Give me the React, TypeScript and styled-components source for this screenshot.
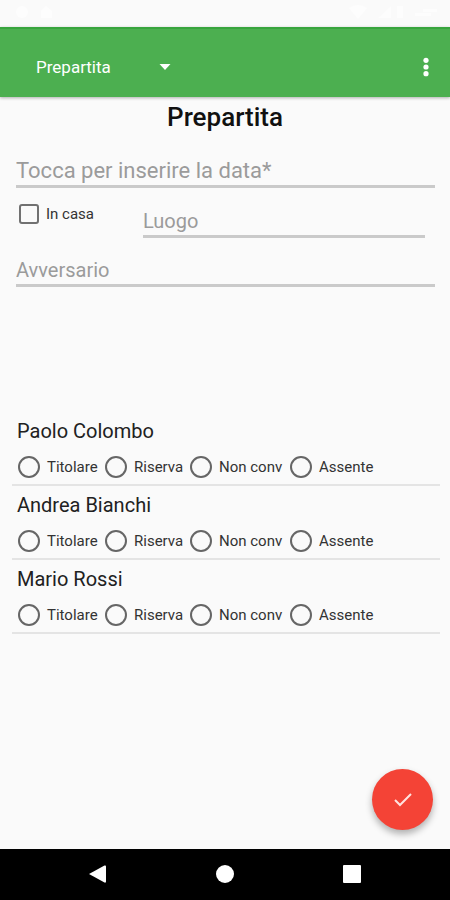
import React from "react";
import styled, { createGlobalStyle } from "styled-components";

const GlobalStyle = createGlobalStyle`
  * { box-sizing: border-box; }
  body {
    margin: 0;
    background: #fafafa;
    font-family: Roboto, "Liberation Sans", sans-serif;
    color: #212121;
  }
`;

const Screen = styled.div`
  display: flex;
  flex-direction: column;
  min-height: 100vh;
`;

const StatusBar = styled.div`
  display: flex;
  justify-content: space-between;
  align-items: flex-start;
  height: 27px;
  padding: 4px 9px 0 14px;
`;

const Toolbar = styled.header`
  display: flex;
  align-items: center;
  justify-content: space-between;
  height: 70px;
  padding: 8px 12px 0 36px;
  background: #4caf50;
  border-top: 2px solid #38a53d;
  box-shadow: 0 1px 3px rgba(0, 0, 0, 0.3);
`;

const Spinner = styled.div`
  display: grid;
  grid-template-columns: 135px;
  align-items: center;

  > * { grid-area: 1 / 1; }
  > svg { justify-self: end; pointer-events: none; }
`;

const SpinnerSelect = styled.select`
  appearance: none;
  width: 100%;
  height: 40px;
  padding: 0;
  border: 0;
  background: transparent;
  color: #fff;
  font: 400 17px/24px Roboto, sans-serif;
`;

const IconButton = styled.button`
  display: flex;
  align-items: center;
  justify-content: center;
  width: 24px;
  height: 40px;
  padding: 0;
  border: 0;
  background: transparent;
  color: #fff;
`;

const Form = styled.form`
  display: flex;
  flex: 1;
  flex-direction: column;
`;

const Title = styled.h1`
  margin: 4px 0 0;
  font-size: 26px;
  line-height: 32px;
  font-weight: 500;
  text-align: center;
  color: #111;
`;

const Fields = styled.div`
  display: flex;
  flex-direction: column;
  padding: 19px 15px 0 16px;
`;

const TextField = styled.input<{ $large?: boolean }>`
  width: 100%;
  height: 36px;
  padding: 4px 0 0;
  border: 0;
  border-bottom: 3px solid #cacaca;
  border-radius: 0;
  outline: 0;
  background: transparent;
  color: #212121;
  font: 400 ${(p) => (p.$large ? 22 : 20)}px/28px Roboto, sans-serif;

  &::placeholder { color: #9b9b9b; opacity: 1; }
`;

const PlaceRow = styled.div`
  display: grid;
  grid-template-columns: 127px 1fr;
  padding: 14px 10px 13px 0;
`;

const Choice = styled.label`
  display: flex;
  align-items: center;
  gap: 7px;
  font-size: 15px;
  line-height: 22px;
  white-space: nowrap;
  color: #333;
`;

const HomeChoice = styled(Choice)`
  align-self: start;
  padding: 1px 0 0 3px;
`;

const Checkbox = styled.input`
  appearance: none;
  width: 20px;
  height: 20px;
  margin: 0;
  border: 2px solid #717171;
  border-radius: 3px;

  &:checked { background: #4caf50; }
`;

const Radio = styled.input`
  appearance: none;
  width: 22px;
  height: 22px;
  margin: 0;
  border: 2px solid #666;
  border-radius: 50%;

  &:checked { background: radial-gradient(#4caf50 45%, transparent 50%); }
`;

const Players = styled.div`
  display: flex;
  flex-direction: column;
  margin: 125px 10px 0 12px;
`;

const Player = styled.fieldset`
  min-width: 0;
  height: 74px;
  margin: 0;
  padding: 0 0 0 5px;
  border: 0;
  border-bottom: 2px solid #e4e4e4;
`;

const PlayerName = styled.legend`
  padding: 5px 0 0;
  font-size: 20px;
  line-height: 28px;
`;

const Options = styled.div`
  display: grid;
  grid-template-columns: 87px 85px 100px 1fr;
  padding: 11px 0 0 1px;
`;

const ActionArea = styled.div`
  display: flex;
  justify-content: flex-end;
  margin-top: auto;
  padding: 16px 17px 19px;
`;

const Fab = styled.button`
  display: flex;
  align-items: center;
  justify-content: center;
  width: 61px;
  height: 61px;
  padding: 0;
  border: 0;
  border-radius: 50%;
  background: #f44336;
  box-shadow: 0 4px 7px rgba(0, 0, 0, 0.3);
`;

const NavBar = styled.nav`
  display: flex;
  justify-content: center;
  gap: 103px;
  align-items: center;
  height: 51px;
  padding-bottom: 1px;
  background: #000;
`;

const roles = ["Titolare", "Riserva", "Non conv", "Assente"];
const players = ["Paolo Colombo", "Andrea Bianchi", "Mario Rossi"];

export default function App() {
  return (
    <>
      <GlobalStyle />
      <Screen>
        <StatusBar aria-hidden="true">
          <svg width="42" height="16" fill="#fdfdfd">
            <circle cx="8" cy="8" r="6" />
            <path d="M27 14V7l5-5 6 5v7z" />
          </svg>
          <svg width="92" height="16" fill="#fdfdfd">
            <path d="M0 4q9-6 18 0l-9 11z" />
            <path d="M29 14 42 2v12zM48 2h6v12h-6zM66 9h16v3H66zM74 5h14v3H74z" />
          </svg>
        </StatusBar>
        <Toolbar>
          <Spinner>
            <SpinnerSelect aria-label="Sezione">
              <option>Prepartita</option>
            </SpinnerSelect>
            <svg width="12" height="6" fill="#fff" aria-hidden="true">
              <path d="M.5 0h11L6 6z" />
            </svg>
          </Spinner>
          <IconButton aria-label="Altre opzioni">
            <svg width="6" height="20" fill="currentColor">
              <circle cx="3" cy="3.300" r="2.600" />
              <circle cx="3" cy="10" r="2.600" />
              <circle cx="3" cy="16.700" r="2.600" />
            </svg>
          </IconButton>
        </Toolbar>
        <Form onSubmit={(e) => e.preventDefault()}>
          <Title>Prepartita</Title>
          <Fields>
            <TextField $large aria-label="Data" placeholder="Tocca per inserire la data*" />
            <PlaceRow>
              <HomeChoice>
                <Checkbox type="checkbox" />
                In casa
              </HomeChoice>
              <TextField aria-label="Luogo" placeholder="Luogo" />
            </PlaceRow>
            <TextField aria-label="Avversario" placeholder="Avversario" />
          </Fields>
          <Players>
            {players.map((name) => (
              <Player key={name}>
                <PlayerName>{name}</PlayerName>
                <Options>
                  {roles.map((role) => (
                    <Choice key={role}>
                      <Radio type="radio" name={name} value={role} />
                      {role}
                    </Choice>
                  ))}
                </Options>
              </Player>
            ))}
          </Players>
          <ActionArea>
            <Fab type="submit" aria-label="Conferma">
              <svg width="20" height="16" fill="none" stroke="#ffe3df" strokeWidth="2">
                <path d="m2 8 5 5L18 2" />
              </svg>
            </Fab>
          </ActionArea>
        </Form>
        <NavBar>
          <IconButton aria-label="Indietro">
            <svg width="18" height="18" fill="currentColor">
              <path d="M0 9 15.500 .5Q17 0 17 1.500v15Q17 18 15.500 17.500z" />
            </svg>
          </IconButton>
          <IconButton aria-label="Home">
            <svg width="18" height="18" fill="currentColor">
              <circle cx="9" cy="9" r="9" />
            </svg>
          </IconButton>
          <IconButton aria-label="Recenti">
            <svg width="18" height="18" fill="currentColor">
              <rect width="18" height="18" rx="1" />
            </svg>
          </IconButton>
        </NavBar>
      </Screen>
    </>
  );
}
